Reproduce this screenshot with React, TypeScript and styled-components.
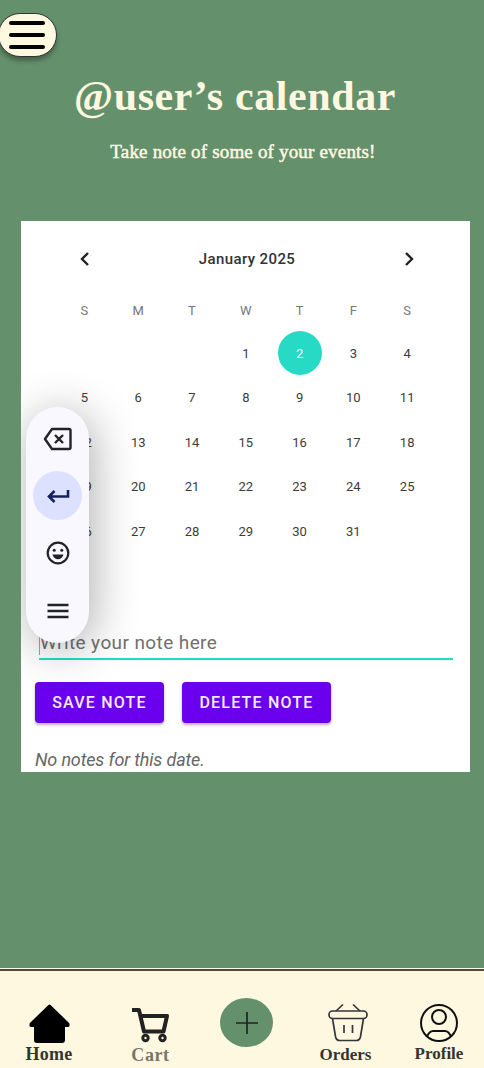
import React from 'react';
import styled, { createGlobalStyle } from 'styled-components';

const GlobalStyle = createGlobalStyle`
  * { box-sizing: border-box; }
  body { margin: 0; background: #64906b; }
  button { border: 0; padding: 0; font: inherit; }
  svg { display: block; }
`;

const serif = `'Liberation Serif', 'Times New Roman', serif`;

const Screen = styled.div`
  display: flex;
  flex-direction: column;
  width: 484px;
  height: 1068px;
  overflow: hidden;
  background: #64906b;
  font-family: Roboto, sans-serif;
`;

const MenuButton = styled.button`
  display: flex;
  flex-direction: column;
  align-items: center;
  justify-content: center;
  gap: 8px;
  flex: none;
  width: 59px;
  height: 44px;
  margin: 13px 0 0 -2px;
  border: 1px solid #333;
  border-radius: 22px;
  background: #fef8e1;
  box-shadow: 0 4px 4px rgba(0, 0, 0, 0.3);
`;

const MenuLine = styled.span`
  width: 36px;
  height: 4px;
  margin-right: 2px;
  border-radius: 2px;
  background: #000;
`;

const Header = styled.header`
  display: flex;
  flex-direction: column;
  align-items: center;
  height: 164px;
  color: #fef8e1;
  font-family: ${serif};
  white-space: nowrap;
`;

const Title = styled.h1`
  margin: 15px 0 0;
  padding-right: 14px;
  font-size: 42px;
  line-height: 48px;
  font-weight: 700;
  letter-spacing: 0.6px;
`;

const Subtitle = styled.p`
  margin: 21px 0 0;
  padding-left: 2px;
  font-size: 19px;
  line-height: 22px;
  letter-spacing: 0.18px;
  -webkit-text-stroke: 0.5px #fef8e1;
`;

const Card = styled.main`
  position: relative;
  display: flex;
  flex-direction: column;
  width: 449px;
  height: 551px;
  margin-left: 21px;
  background: #fff;
`;

const MonthBar = styled.div`
  display: flex;
  align-items: center;
  justify-content: space-between;
  width: 340px;
  height: 24px;
  margin: 26px 0 0 56px;
  color: #333;
`;

const Month = styled.span`
  font-size: 15px;
  font-weight: 500;
  letter-spacing: 0.4px;
`;

const Days = styled.div`
  display: grid;
  grid-template-columns: repeat(7, 53.8px);
  grid-template-rows: 41px 44px repeat(4, 44.8px);
  width: 377px;
  margin: 19px 0 0 36.5px;
`;

const Cell = styled.span<{ $head?: boolean; $selected?: boolean }>`
  place-self: center;
  display: grid;
  place-items: center;
  width: 44px;
  height: 44px;
  border-radius: 50%;
  font-size: 13px;
  color: ${(p) => (p.$selected ? '#fff' : p.$head ? '#777' : '#3c3c3c')};
  background: ${(p) => (p.$selected ? '#26dac5' : 'transparent')};
`;

const NoteField = styled.div`
  width: 414px;
  height: 30px;
  margin: 75.6px 0 0 18px;
  border-bottom: 2px solid #26dac5;
`;

const Placeholder = styled.div`
  height: 25px;
  border-left: 1px solid #26dac5;
  font-size: 19px;
  line-height: 26px;
  letter-spacing: 0.4px;
  color: #707070;
`;

const Actions = styled.div`
  display: flex;
  gap: 18px;
  margin: 22.4px 0 0 14px;
`;

const Action = styled.button<{ $width: number }>`
  width: ${(p) => p.$width}px;
  height: 41px;
  border-radius: 4px;
  background: #6a00ee;
  color: #f3eaff;
  font-size: 16px;
  font-weight: 500;
  letter-spacing: 1.2px;
  white-space: nowrap;
  box-shadow: 0 2px 3px rgba(0, 0, 0, 0.3);
`;

const Empty = styled.p`
  margin: 26px 0 0 14px;
  color: #666;
  font-size: 18px;
  line-height: 22px;
  font-style: italic;
  letter-spacing: -0.15px;
  white-space: nowrap;
`;

const KeyPanel = styled.aside`
  position: absolute;
  left: 5px;
  top: 186px;
  display: flex;
  flex-direction: column;
  align-items: center;
  width: 63px;
  height: 236px;
  padding-top: 7px;
  gap: 8.4px;
  border-radius: 32px;
  background: #f9f8ff;
  box-shadow: 4px 6px 46px rgba(0, 0, 0, 0.32);
  clip-path: inset(-70px -90px -80px -5px);
`;

const Key = styled.button<{ $active?: boolean }>`
  display: grid;
  place-items: center;
  flex: none;
  width: 49px;
  height: 49px;
  border-radius: 50%;
  color: ${(p) => (p.$active ? '#14215e' : '#222229')};
  background: ${(p) => (p.$active ? '#dce1ff' : 'transparent')};
`;

const Nav = styled.nav`
  display: flex;
  height: 100px;
  margin-top: auto;
  border-top: 1px solid #fef8e1;
  background: #fef8e1;
  box-shadow: inset 0 2px 0 #4b4d40;
`;

const Tab = styled.a<{ $width: number; $top: number; $color?: string }>`
  display: flex;
  flex-direction: column;
  align-items: center;
  width: ${(p) => p.$width}px;
  padding-top: ${(p) => p.$top}px;
  color: ${(p) => p.$color ?? '#35352f'};
`;

const TabLabel = styled.span<{ $size?: number; $spacing?: number }>`
  font-family: ${serif};
  font-size: ${(p) => p.$size ?? 17}px;
  line-height: 21px;
  font-weight: 700;
  letter-spacing: ${(p) => p.$spacing ?? 0}px;
`;

const AddButton = styled.button`
  display: grid;
  place-items: center;
  width: 53px;
  height: 49px;
  margin-top: 29px;
  border-radius: 50%;
  background: #64906b;
`;

const weekdays = ['S', 'M', 'T', 'W', 'T', 'F', 'S'];
const dates = Array.from({ length: 31 }, (_, i) => i + 1);

export default function App() {
  return (
    <Screen>
      <GlobalStyle />
      <MenuButton aria-label="Menu">
        <MenuLine />
        <MenuLine />
        <MenuLine />
      </MenuButton>
      <Header>
        <Title>@user’s calendar</Title>
        <Subtitle>Take note of some of your events!</Subtitle>
      </Header>
      <Card>
        <MonthBar>
          <svg width="16" height="18" viewBox="0 0 16 18" fill="none" stroke="#222" strokeWidth="2.4">
            <path d="M11 3 5 9l6 6" />
          </svg>
          <Month>January 2025</Month>
          <svg width="16" height="18" viewBox="0 0 16 18" fill="none" stroke="#222" strokeWidth="2.4">
            <path d="m5 3 6 6-6 6" />
          </svg>
        </MonthBar>
        <Days>
          {weekdays.map((d, i) => (
            <Cell key={`h${i}`} $head>{d}</Cell>
          ))}
          <Cell />
          <Cell />
          <Cell />
          {dates.map((d) => (
            <Cell key={d} $selected={d === 2}>{d}</Cell>
          ))}
        </Days>
        <NoteField>
          <Placeholder>Write your note here</Placeholder>
        </NoteField>
        <Actions>
          <Action $width={129}>SAVE NOTE</Action>
          <Action $width={149}>DELETE NOTE</Action>
        </Actions>
        <Empty>No notes for this date.</Empty>
        <KeyPanel>
          <Key aria-label="Backspace">
            <svg width="30" height="24" viewBox="0 0 30 24" fill="none" stroke="currentColor" strokeWidth="2.4">
              <path d="M9 2h17q1.500 0 1.500 1.500v17q0 1.500-1.500 1.500H9L2 12z" strokeLinejoin="round" />
              <path d="m12 8 8 8m0-8-8 8" />
            </svg>
          </Key>
          <Key $active aria-label="Enter">
            <svg width="24" height="16" viewBox="0 0 24 16" fill="none" stroke="currentColor" strokeWidth="2.6">
              <path d="M22 2v6.500H3M8.500 3 3 8.500 8.500 14" />
            </svg>
          </Key>
          <Key aria-label="Emoji">
            <svg width="24" height="24" viewBox="0 0 24 24" fill="none" stroke="currentColor" strokeWidth="2.2">
              <circle cx="12" cy="12" r="10.3" />
              <g fill="currentColor" stroke="none">
                <circle cx="8.2" cy="9.3" r="1.5" />
                <circle cx="15.8" cy="9.3" r="1.5" />
                <path d="M6.500 13.500h11q-1.500 4.800-5.500 4.800t-5.500-4.800z" />
              </g>
            </svg>
          </Key>
          <Key aria-label="More">
            <svg width="22" height="16" viewBox="0 0 22 16" stroke="currentColor" strokeWidth="2.4">
              <path d="M.5 2h21M.5 8h21M.5 14h21" />
            </svg>
          </Key>
        </KeyPanel>
      </Card>
      <Nav>
        <Tab $width={98} $top={34}>
          <svg width="42" height="41" viewBox="0 0 42 41">
            <path d="M21.500 3 3 21v1.500h4.500V37q0 1.500 1.500 1.500h25q1.500 0 1.500-1.500V22.500H40V21z" stroke="#000" strokeWidth="3" strokeLinejoin="round" />
          </svg>
          <TabLabel $size={18} $spacing={0.3}>Home</TabLabel>
        </Tab>
        <Tab $width={105} $top={37} $color="#77756a">
          <svg width="42" height="39" viewBox="0 0 42 39" fill="none" stroke="#222" strokeWidth="4">
            <path d="M2 4h7l5 21.500h19.500L37 10H11" strokeLinejoin="round" />
            <circle cx="15.500" cy="32" r="2.700" strokeWidth="3" />
            <circle cx="32.500" cy="32" r="2.700" strokeWidth="3" />
          </svg>
          <TabLabel $size={18} $spacing={0.6}>Cart</TabLabel>
        </Tab>
        <Tab $width={87} $top={0}>
          <AddButton aria-label="Add">
            <svg width="24" height="24" viewBox="0 0 24 24" stroke="#222" strokeWidth="1.7">
              <path d="M12 1v22M1 12h22" />
            </svg>
          </AddButton>
        </Tab>
        <Tab $width={111} $top={34}>
          <svg width="48" height="41" viewBox="-7 0 48 41" fill="none" stroke="#34353a" strokeWidth="1.7">
            <rect x="0" y="8" width="38" height="7.500" rx="3.500" />
            <path d="M7 8 14 1.500M31 8l-7-6.500M3.500 15.500l3 18q.8 4 4 4h17q3.200 0 4-4l3-18M15 22v8M23.500 22v8" />
          </svg>
          <TabLabel>Orders</TabLabel>
        </Tab>
        <Tab $width={76} $top={34}>
          <svg width="40" height="40" viewBox="0 0 40 40" fill="none" stroke="#111" strokeWidth="2">
            <circle cx="20" cy="20" r="18" />
            <circle cx="20" cy="14" r="7" />
            <path d="M8 33.500q2.500-5.500 6-5.500h12q3.500 0 6 5.500" />
          </svg>
          <TabLabel>Profile</TabLabel>
        </Tab>
      </Nav>
    </Screen>
  );
}
